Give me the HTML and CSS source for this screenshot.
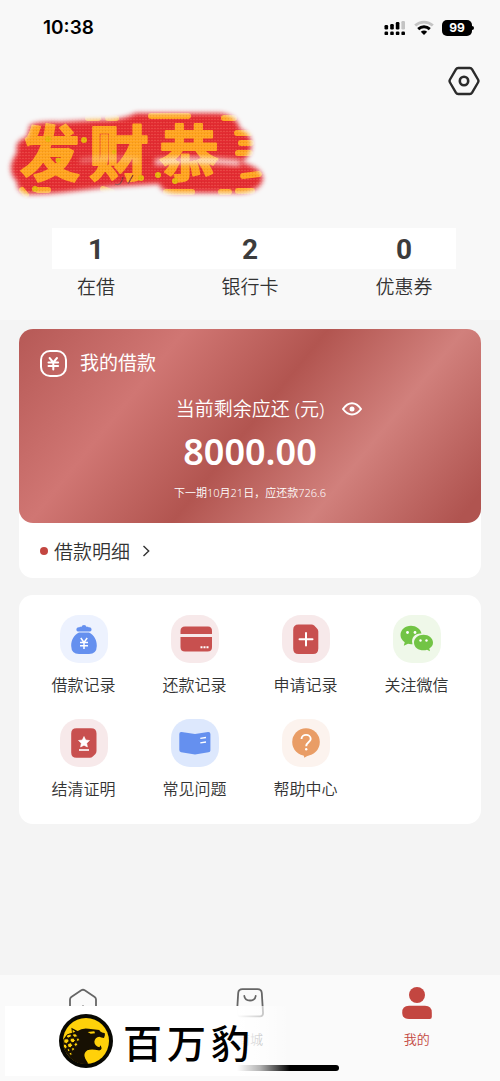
FILE: index.html
```html
<!DOCTYPE html>
<html lang="zh-CN">
<head>
<meta charset="utf-8">
<meta name="viewport" content="width=device-width, initial-scale=1">
<title>我的</title>
<link rel="stylesheet" href="styles.css">
</head>
<body>
<div class="page">
  <header class="header">
    <div class="status">
      <time class="clock">10:38</time>
      <div class="status-icons">
        <svg width="22" height="16" viewBox="0 0 22 16" aria-hidden="true">
          <g fill="#000"><rect x="0.5" y="5" width="3.6" height="4.5" rx="1.2"/><rect x="6.2" y="4" width="3.6" height="5.5" rx="1.2"/><rect x="11.8" y="2" width="3.6" height="7.5" rx="1.2"/>
          <rect x="0.5" y="11.5" width="3.6" height="3.6" rx="1.2"/><rect x="6.2" y="11.5" width="3.6" height="3.6" rx="1.2"/><rect x="11.8" y="11.5" width="3.6" height="3.6" rx="1.2"/><rect x="17.4" y="11.5" width="3.6" height="3.6" rx="1.2"/></g>
          <rect x="17.4" y="1" width="3.6" height="8.5" rx="1.2" fill="#c4c4c4"/>
        </svg>
        <svg width="20" height="16" viewBox="0 0 20 16" fill="none" aria-hidden="true">
          <path d="M1.200 5.600C6.200.9 13.800.9 18.800 5.600" stroke="#c4c4c4" stroke-width="2.800"/>
          <path d="M4.200 9.100C7.600 6 12.400 6 15.800 9.100" stroke="#000" stroke-width="2.900"/>
          <path d="M6.800 11.800C8.800 10 11.200 10 13.200 11.800L10 15Z" fill="#000"/>
        </svg>
        <span class="battery">99</span>
      </div>
    </div>
    <div class="tools">
      <button class="settings" type="button" aria-label="设置">
        <svg width="32" height="30" viewBox="0 0 32 30" fill="none" stroke="#2b2b2b" aria-hidden="true">
          <path d="M10.200 2H21.800Q23.300 2 24.100 3.300L30 13.500Q30.900 15 30 16.500L24.100 26.700Q23.300 28 21.800 28H10.200Q8.700 28 7.900 26.700L2 16.500Q1.100 15 2 13.500L7.900 3.300Q8.700 2 10.200 2Z" stroke-width="2.400"/>
          <circle cx="16" cy="15" r="4.200" stroke-width="2.600"/>
        </svg>
      </button>
    </div>
    <svg class="banner" width="280" height="100" viewBox="0 0 280 100" role="img" aria-label="发财恭">
      <defs>
        <filter id="soft" x="-10%" y="-20%" width="120%" height="140%"><feGaussianBlur stdDeviation="2.800"/></filter>
        <filter id="haze" x="-30%" y="-200%" width="160%" height="500%"><feGaussianBlur stdDeviation="2.500"/></filter>
        <pattern id="weave" width="3" height="3" patternUnits="userSpaceOnUse"><rect width="1" height="1" fill="#8f2410" opacity=".14"/><rect x="1" y="1" width="2" height="1" fill="#ffd0a0" opacity=".16"/></pattern>
        <path id="patch" d="M30 25Q40 21 60 22L95 20Q122 21 136 13H220Q237 15 240 29Q253 33 251 49Q249 59 240 62Q262 67 263 79Q260 92 240 93H174Q161 92 159 84L110 87L75 91Q40 95 26 94Q16 90 17 82Q10 75 11 65Q13 58 17 52Q14 41 27 37Z"/>
        <mask id="edge"><use href="#patch" fill="#fff" filter="url(#soft)"/></mask>
      </defs>
      <g mask="url(#edge)">
        <rect width="280" height="100" fill="#e32c32"/>
        <g fill="none" stroke="#ffa51f" stroke-width="6" stroke-linecap="round">
          <path d="M88 18h10M108 18h8M151 16h37M224 18h10M237 33h13M241 43h10M238 53h12M22 90l4 5M38 90h10M103 89l9 3M166 92h26M221 92h8M238 91h14M243 76l16-2"/>
        </g>
        <g class="banner-text"><text x="20" y="76">发</text><text x="89" y="76">财</text><text x="159" y="76">恭</text></g>
        <g fill="#e5b60a"><circle cx="48" cy="39" r="3"/><circle cx="84" cy="40" r="3"/><circle cx="58" cy="60" r="2.500"/><circle cx="141" cy="78" r="3"/><circle cx="158" cy="75" r="3"/><circle cx="175" cy="81" r="3"/><circle cx="35" cy="89" r="3"/><circle cx="114" cy="52" r="2"/></g>
        <path d="M155 62Q196 58 240 63" stroke="#fff" stroke-width="6" opacity=".8" fill="none" filter="url(#haze)"/>
        <path d="M80 61Q110 56 140 61" stroke="#fff" stroke-width="5" opacity=".3" fill="none" filter="url(#haze)"/>
        <path d="M115 84Q121 87 123 77M128 84l5-9" stroke="#823333" stroke-width="1.200" fill="none"/>
        <rect width="280" height="100" fill="url(#weave)"/>
      </g>
    </svg>
    <div class="stats">
      <i class="strip"></i>
      <a class="stat stat-1" href="#"><b>1</b><span>在借</span></a>
      <a class="stat stat-2" href="#"><b>2</b><span>银行卡</span></a>
      <a class="stat stat-3" href="#"><b>0</b><span>优惠券</span></a>
    </div>
  </header>

  <main class="main">
    <section class="loan">
      <div class="loan-card">
        <h2 class="loan-title">
          <svg width="27" height="27" viewBox="0 0 27 27" fill="none" stroke="#fff" aria-hidden="true"><rect x="1" y="1" width="25" height="25" rx="9" stroke-width="2"/><path d="M9.600 8l3.700 4.400L17 8M13.300 12.400V19.500M8.500 12.400h9.600M8.500 15.900h9.600" stroke-width="2" stroke-linecap="round"/></svg>
          我的借款
        </h2>
        <div class="loan-label">
          <span>当前剩余应还 (元)</span>
          <button class="eye" type="button" aria-label="隐藏金额"><svg width="20" height="14" viewBox="0 0 20 14" fill="none" aria-hidden="true"><path d="M1 7Q5 1.200 10 1.200T19 7Q15 12.500 10 12.500T1 7Z" stroke="#fff" stroke-width="2" stroke-linejoin="round"/><circle cx="10" cy="7" r="2.500" fill="#fff"/></svg></button>
        </div>
        <strong class="amount">8000.00</strong>
        <p class="next">下一期10月21日，应还款726.6</p>
      </div>
      <a class="detail" href="#"><i class="dot"></i><span>借款明细</span><svg width="8" height="12" viewBox="0 0 8 12" fill="none" stroke="#333" stroke-width="1.400" aria-hidden="true"><path d="M1.500 1L6.700 6L1.500 11"/></svg></a>
    </section>

    <nav class="services" aria-label="服务">
      <a class="service" href="#">
        <svg width="48" height="48" viewBox="0 0 48 48" aria-hidden="true"><rect width="48" height="48" rx="19" fill="#edf2fe"/><path d="M18 16.500C15.500 16 16 11.500 19.500 12.200C20 11.500 21 11.800 21.500 12C21.800 9.300 26.200 9.300 26.500 12C27 11.800 28 11.500 28.500 12.200C32 11.500 32.500 16 30 16.500Z" fill="#6590ef"/><path d="M19 17.500H29C34 20 37 25 36.800 31Q36.600 39 29 39H19Q11.400 39 11.200 31C11 25 14 20 19 17.500Z" fill="#6590ef"/><path d="M20.800 23l3.200 4.400 3.200-4.400M24 27.400V34M20 27.400h8M20 30.700h8" stroke="#fff" stroke-width="1.500" fill="none"/></svg>
        <span>借款记录</span></a>
      <a class="service" href="#">
        <svg width="48" height="48" viewBox="0 0 48 48" aria-hidden="true"><rect width="48" height="48" rx="19" fill="#f7e9ea"/><path d="M9.500 19V16Q9.500 11.500 14 11.500H37Q41 11.500 41 16V19Z" fill="#c8504f"/><path d="M9.500 22H41V32Q41 36.500 36.500 36.500H14Q9.500 36.500 9.500 32Z" fill="#c8504f"/><path d="M29.500 32.200h2M32.500 32.200h2M35.500 32.200h2" stroke="#fff" stroke-width="2"/></svg>
        <span>还款记录</span></a>
      <a class="service" href="#">
        <svg width="48" height="48" viewBox="0 0 48 48" aria-hidden="true"><rect width="48" height="48" rx="19" fill="#f7e9ea"/><path d="M16.500 9.500H29.500Q31 9.500 32.200 10.600L34.800 13.200Q36.300 14.700 36.300 16.500V33.500Q36.300 39 31 39H16.500Q11.200 39 11.200 33.500V15Q11.200 9.500 16.500 9.500Z" fill="#c8504f"/><path d="M24 18v12.500M17.500 24.200H30.500" stroke="#fff" stroke-width="2" stroke-linecap="round"/></svg>
        <span>申请记录</span></a>
      <a class="service" href="#">
        <svg width="48" height="48" viewBox="0 0 48 48" aria-hidden="true"><rect width="48" height="48" rx="19" fill="#eff8e9"/><path d="M18 10.800C12 10.800 7.500 15 7.500 20C7.500 23 9.200 25.500 11.700 27.200L10.800 30.800L15 28.800Q17 29.400 19.500 29.200C17.500 21.500 23 18 28.500 18.500C27.500 14 23 10.800 18 10.800Z" fill="#72c445"/><path d="M30.500 19.800C25.300 19.800 21 23.200 21 27.700S25.300 35.300 30.500 35.300Q32.500 35.300 34 34.700L37 36.300L36.300 33.500C38.700 32 40 30 40 27.700C40 23.200 35.700 19.800 30.500 19.800Z" fill="#72c445"/><g fill="#fff"><circle cx="14.500" cy="17.500" r="1.400"/><circle cx="22" cy="17.500" r="1.400"/><circle cx="27.500" cy="25.500" r="1.200"/><circle cx="33.500" cy="25.500" r="1.200"/></g></svg>
        <span>关注微信</span></a>
      <a class="service" href="#">
        <svg width="48" height="48" viewBox="0 0 48 48" aria-hidden="true"><rect width="48" height="48" rx="19" fill="#f7e9ea"/><path d="M16.500 9.300H31Q36.500 9.300 36.500 14.500V32Q36.500 34 35.200 35.200L32.800 37.600Q31.600 38.800 29.800 38.800H16.500Q11.200 38.800 11.200 33.500V14.500Q11.200 9.300 16.500 9.300Z" fill="#c8504f"/><path d="M24 17.500l1.700 3.500 3.800.5-2.800 2.700.7 3.800-3.400-1.800-3.400 1.800.7-3.800-2.800-2.700 3.800-.5Z" fill="#fff" stroke="#fff" stroke-width=".6" stroke-linejoin="round"/><path d="M19 31h10" stroke="#fff" stroke-width="1.600"/></svg>
        <span>结清证明</span></a>
      <a class="service" href="#">
        <svg width="48" height="48" viewBox="0 0 48 48" aria-hidden="true"><rect width="48" height="48" rx="19" fill="#dde8fd"/><path d="M8.300 15Q8.300 12.800 10.500 13L24 15L37 13Q39.400 12.800 39.400 15V31.500Q39.400 33 37.500 33.300L24 35.500L10.200 33.300Q8.300 33 8.300 31Z" fill="#6590ef"/><path d="M29.300 19.300L35 18.500M29.300 23.800L35 23" stroke="#fff" stroke-width="1.300"/></svg>
        <span>常见问题</span></a>
      <a class="service" href="#">
        <svg width="48" height="48" viewBox="0 0 48 48" aria-hidden="true"><rect width="48" height="48" rx="19" fill="#fcf3ee"/><circle cx="24" cy="23" r="13.800" fill="#e99d66"/><path d="M21.500 35.500L22.300 38.800L27 36Z" fill="#e99d66"/><path d="M19.500 20C19.500 14.500 28.700 14.500 28.700 20C28.700 23 24.200 23 24.200 27.300" fill="none" stroke="#fff" stroke-width="1.900"/><circle cx="24.200" cy="30.300" r="1.200" fill="#fff"/></svg>
        <span>帮助中心</span></a>
    </nav>
  </main>

  <footer class="footer">
    <nav class="tabs" aria-label="主导航">
      <a class="tab" href="#" aria-label="首页"><svg width="32" height="32" viewBox="0 0 32 32" fill="none" stroke="#666" stroke-width="1.800" aria-hidden="true"><path d="M3 28V12.500Q3 11 4.300 10L14.300 3.300Q16 2.200 17.700 3.300L27.700 10Q29 11 29 12.500V28Q29 30 27 30H5Q3 30 3 28Z"/><path d="M16 18.500v5"/></svg></a>
      <a class="tab" href="#"><svg width="32" height="32" viewBox="0 0 32 32" fill="none" stroke="#666" stroke-width="1.800" aria-hidden="true"><path d="M8.500 2.200H23.500Q27.500 2.200 27.800 6L29 25.500Q29.200 29.300 26 29.300H6Q2.800 29.300 3 25.500L4.200 6Q4.500 2.200 8.500 2.200Z"/><path d="M10.300 9C11 15 21 15 21.700 9" stroke-linecap="round"/></svg><span>商城</span></a>
      <a class="tab tab-on" href="#" aria-current="page"><svg width="32" height="32" viewBox="0 0 32 32" fill="#c34640" aria-hidden="true"><circle cx="16" cy="8" r="8"/><path d="M8 18.700H24Q30.800 18.700 30.800 25.500V30Q30.800 32 28.800 32H8Q1.200 32 1.200 25.400T8 18.700Z"/></svg><span>我的</span></a>
    </nav>
    <div class="indicator"></div>
    <div class="watermark">
      <svg width="54" height="54" viewBox="178 151 162 162" aria-hidden="true">
        <circle cx="259" cy="232" r="81" fill="#080803"/><circle cx="259" cy="232" r="69" fill="#ffd10a"/>
        <path d="M190 235Q194 212 217 207L215 192L234 202Q247 192 267 195L299 199Q302 207 315 208Q318 214 313 223Q304 222 299 219Q286 220 284 234Q285 247 299 251L303 245L306 254Q305 261 296 260Q275 255 263 260Q249 270 257 285L266 300Q236 306 212 283Q191 263 190 235Z" fill="#171003"/>
        <path d="M264 205L284 203L286 209L273 210Z" fill="#ffd10a"/><path d="M289 224l4 9 4-10" fill="#ffd10a"/><path d="M219 198v9l8-3Z" fill="#ffd10a"/>
        <g fill="#ffd10a" stroke="#171003" stroke-width="3"><path d="M203 213l10-2 3 7-9 5-8-2ZM220 210l10 1 4 8-9 2-6-5ZM193 226l11-1 5 7-8 8-9-3ZM212 224l10-1 5 8-7 7-9-5ZM230 224l7-1 3 7-8 4ZM191 241l8 1 4 8-5 6-7-6ZM204 240l9-3 6 8-7 8-8-4ZM222 241l8-5 4 7-6 6ZM202 254l8 2 1 8-7-1ZM215 254l8-3 1 8-6 4ZM207 267l8-1 3 7-6 2Z"/></g>
      </svg>
      <div class="brand"><span>百</span><span>万</span><span>豹</span></div>
    </div>
  </footer>
</div>
</body>
</html>
```
FILE: styles.css
```css
* { box-sizing: border-box; }
body {
  margin: 0;
  background: #f4f4f4;
  color: #333;
  font-family: "Noto Sans", "Noto Sans CJK SC", sans-serif;
  font-weight: 350;
}
a { color: inherit; text-decoration: none; }
button { padding: 0; border: 0; background: none; cursor: pointer; }
svg { display: block; flex: none; }

.page { min-height: 100vh; display: flex; flex-direction: column; }

.header { padding-bottom: 18px; background: #f8f8f8; }
.status {
  display: flex;
  align-items: center;
  justify-content: space-between;
  height: 55px;
  padding: 0 26px 0 43px;
}
.clock { color: #000; font: 600 19px/24px Inter, sans-serif; }
.status-icons { display: flex; align-items: center; gap: 8px; }
.battery {
  position: relative;
  width: 30px;
  margin-right: 2px;
  border-radius: 5px;
  background: #000;
  color: #fff;
  font: 700 12px/16px Inter, sans-serif;
  text-align: center;
}
.battery::after {
  content: "";
  position: absolute;
  right: -2px;
  top: 6px;
  width: 2px;
  height: 4px;
  border-radius: 0 2px 2px 0;
  background: #000;
}
.tools { display: flex; justify-content: flex-end; padding: 11px 20px 4px; }
.banner-text {
  fill: #ffa51f;
  stroke: #ffa51f;
  stroke-width: 2px;
  stroke-linejoin: round;
  font: 700 60px "Noto Sans CJK SC", sans-serif;
}
.stats {
  display: grid;
  grid-template: 41px auto / repeat(3, 1fr);
  margin: 28px 19px 0;
}
.strip { grid-area: 1 / 1 / 2 / 4; margin: 0 25px 0 33px; background: #fff; }
.stat {
  grid-row: 1 / 3;
  display: flex;
  flex-direction: column;
  align-items: center;
  font-size: 19px;
  line-height: 30px;
}
.stat-1 { grid-column: 1; }
.stat-2 { grid-column: 2; }
.stat-3 { grid-column: 3; }
.stat b { color: #3c3c3c; font: 700 28px/44px Roboto, sans-serif; }

.main { padding: 9px 19px 40px; }
.loan { border-radius: 14px; background: #fff; }
.loan-card {
  display: flex;
  flex-direction: column;
  align-items: center;
  height: 194px;
  padding: 20px 21px;
  border-radius: 14px;
  background: linear-gradient(129deg, #b65956 0%, #d07673 27%, #b25550 50%, #d1807c 72%, #b05450 96%);
  color: #fff;
}
.loan-title {
  display: flex;
  align-items: center;
  align-self: stretch;
  gap: 13px;
  margin: 0;
  font-size: 19px;
  font-weight: 400;
  line-height: 28px;
}
.loan-label {
  display: grid;
  grid-template-columns: 1fr auto 1fr;
  align-items: center;
  align-self: stretch;
  margin-top: 18px;
  font-size: 19px;
  line-height: 28px;
}
.loan-label span { grid-column: 2; }
.eye { justify-self: start; margin-left: 18px; }
.amount { margin-top: 9px; font-size: 36px; font-weight: 600; line-height: 40px; }
.next { margin: 13px 0 0; font-size: 11px; line-height: 16px; }
.detail {
  display: flex;
  align-items: center;
  height: 55px;
  padding: 0 21px;
  font-size: 19px;
}
.dot { width: 8px; height: 8px; margin-right: 6px; border-radius: 50%; background: #c34640; }
.detail svg { margin-left: 12px; }

.services {
  display: grid;
  grid-template-columns: repeat(4, 1fr);
  row-gap: 22px;
  margin-top: 17px;
  padding: 20px 9px 23px;
  border-radius: 14px;
  background: #fff;
}
.service {
  display: flex;
  flex-direction: column;
  align-items: center;
  gap: 10px;
  font-size: 16px;
  line-height: 24px;
}

.footer { position: relative; height: 106px; margin-top: auto; background: #fafafa; }
.tabs { display: grid; grid-template-columns: repeat(3, 1fr); padding-top: 12px; }
.tab {
  display: flex;
  flex-direction: column;
  align-items: center;
  gap: 10px;
  color: #666;
  font-size: 13px;
  line-height: 20px;
}
.tab-on { color: #c34640; }
.indicator {
  position: absolute;
  left: 50%;
  bottom: 10px;
  width: 178px;
  height: 6px;
  margin-left: -89px;
  border-radius: 3px;
  background: #000;
}
.watermark {
  position: absolute;
  left: 5px;
  bottom: 5px;
  display: flex;
  align-items: center;
  gap: 10px;
  width: 285px;
  height: 70px;
  padding-left: 54px;
  background: linear-gradient(90deg, #fff 232px, rgba(255, 255, 255, .7) 255px, rgba(255, 255, 255, 0) 285px);
}
.brand {
  display: flex;
  gap: 5px;
  color: #000;
  font: 500 39px/60px "Noto Sans CJK SC", sans-serif;
}
```
